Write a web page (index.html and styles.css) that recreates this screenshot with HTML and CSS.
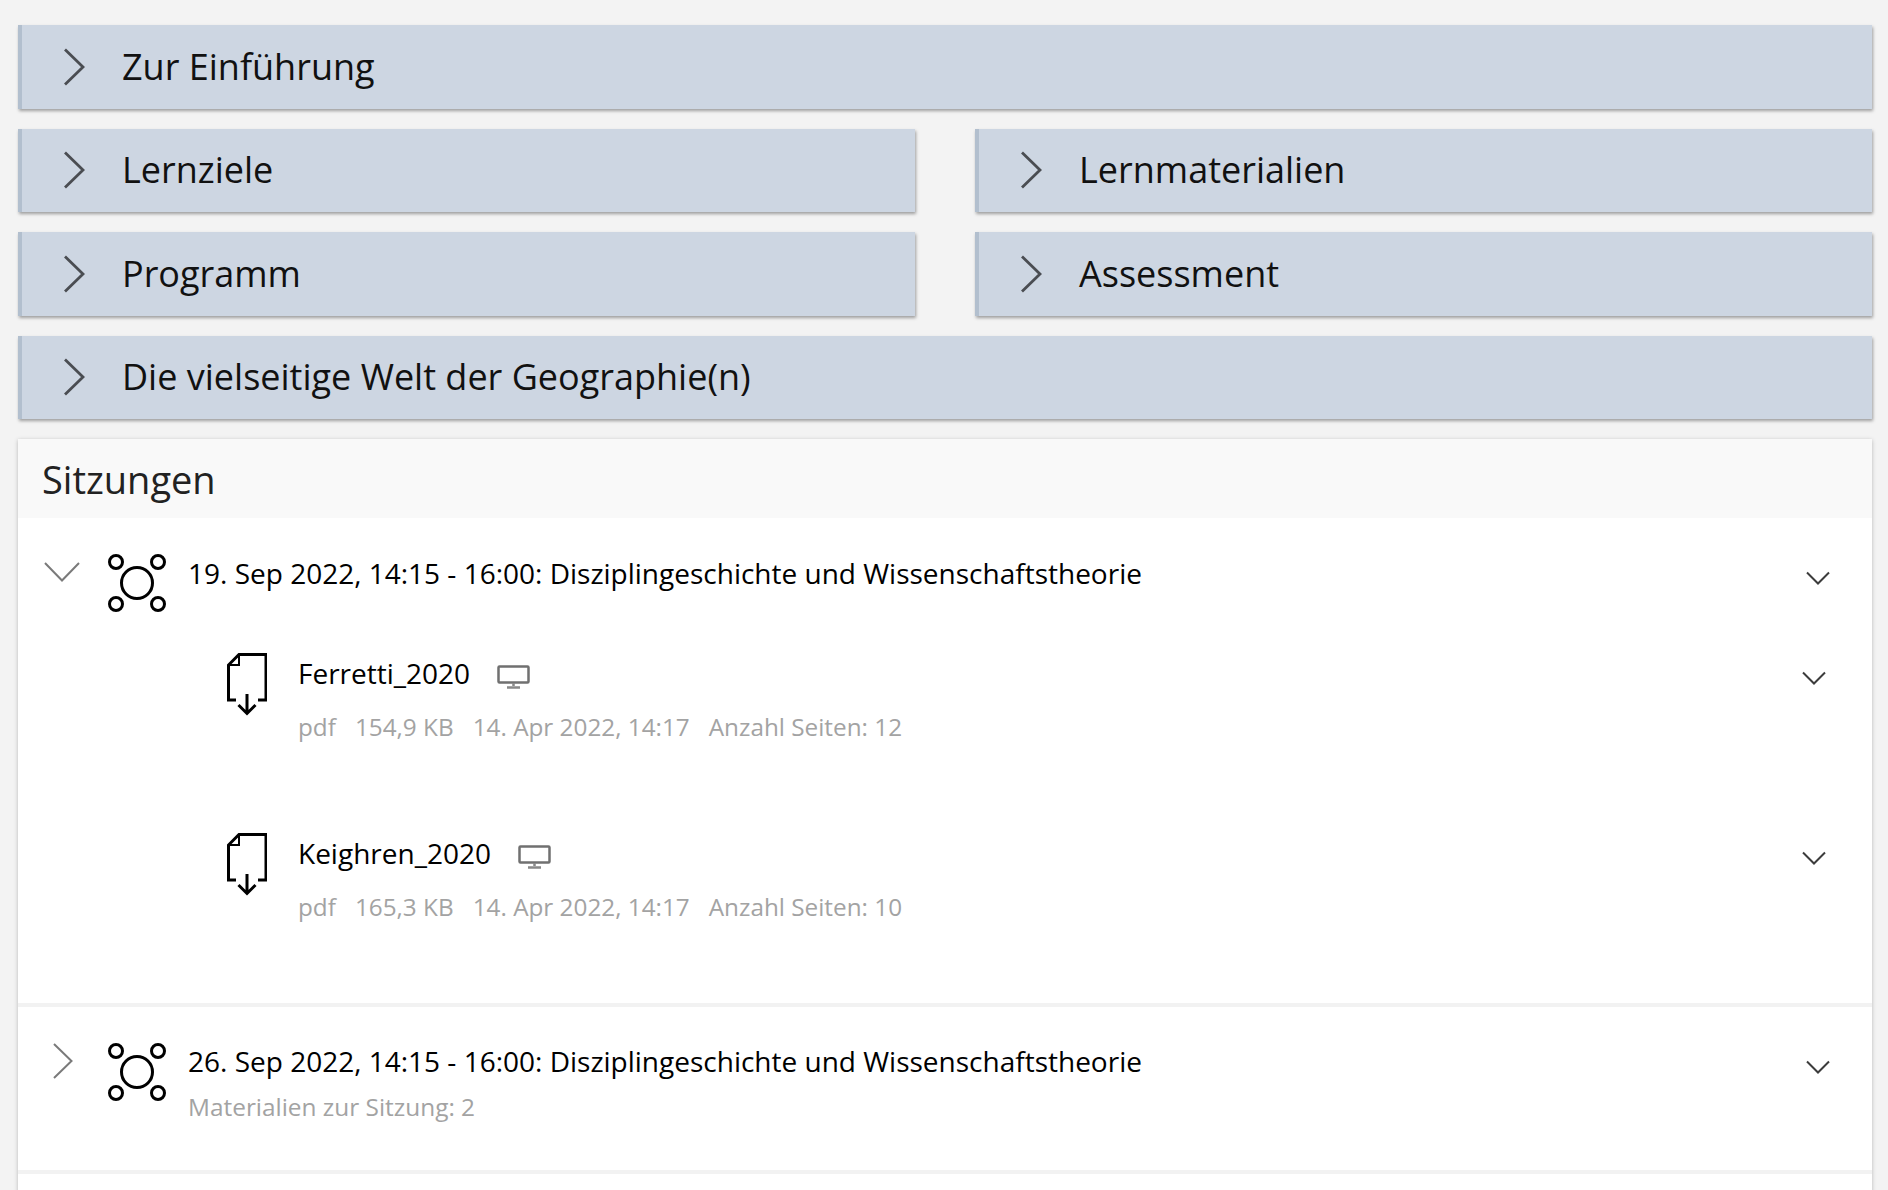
FILE: index.html
```html
<!DOCTYPE html>
<html lang="de">
<head>
<meta charset="utf-8">
<title>Sitzungen</title>
<link rel="stylesheet" href="styles.css">
</head>
<body>
<svg class="defs" width="0" height="0" aria-hidden="true">
  <symbol id="group" viewBox="0 0 58 58">
    <g fill="none" stroke="#000" stroke-width="3">
      <circle cx="29" cy="29" r="15.5"/>
      <circle cx="8" cy="8" r="6.500"/>
      <circle cx="50" cy="8" r="6.500"/>
      <circle cx="8" cy="50" r="6.500"/>
      <circle cx="50" cy="50" r="6.500"/>
    </g>
  </symbol>
  <symbol id="file" viewBox="0 0 40 64">
    <g fill="none" stroke="#000" stroke-width="3">
      <path d="M9 47H1.500V12L12 1.500H39V47H31"/>
      <path d="M1.500 12H12V1.500" stroke-width="2"/>
      <path d="M20 41V60M11.500 52L20 60.500L28.500 52"/>
    </g>
  </symbol>
  <symbol id="monitor" viewBox="0 0 33 24">
    <rect x="1.500" y="1.500" width="30" height="16" rx="1" fill="none" stroke="#707070" stroke-width="2.500"/>
    <path d="M16.500 18V21M10 22.500H23" stroke="#888" stroke-width="2.500" fill="none"/>
  </symbol>
</svg>
<main class="page">
  <section class="bar wide">
    <svg class="bar-chev" viewBox="0 0 22 38"><path d="M2 1.500L20 19L2 36.500"/></svg>
    <h2>Zur Einführung</h2>
  </section>
  <section class="bar">
    <svg class="bar-chev" viewBox="0 0 22 38"><path d="M2 1.500L20 19L2 36.500"/></svg>
    <h2>Lernziele</h2>
  </section>
  <section class="bar">
    <svg class="bar-chev" viewBox="0 0 22 38"><path d="M2 1.500L20 19L2 36.500"/></svg>
    <h2>Lernmaterialien</h2>
  </section>
  <section class="bar">
    <svg class="bar-chev" viewBox="0 0 22 38"><path d="M2 1.500L20 19L2 36.500"/></svg>
    <h2>Programm</h2>
  </section>
  <section class="bar">
    <svg class="bar-chev" viewBox="0 0 22 38"><path d="M2 1.500L20 19L2 36.500"/></svg>
    <h2>Assessment</h2>
  </section>
  <section class="bar wide">
    <svg class="bar-chev" viewBox="0 0 22 38"><path d="M2 1.500L20 19L2 36.500"/></svg>
    <h2>Die vielseitige Welt der Geographie(n)</h2>
  </section>

  <section class="card wide">
    <h2 class="card-title">Sitzungen</h2>

    <article class="session open">
      <div class="session-head">
        <span class="toggle"><svg class="toggle-down" viewBox="0 0 36 20"><path d="M1 1L18 18.500L35 1"/></svg></span>
        <svg class="group-icon"><use href="#group"/></svg>
        <div class="session-text">
          <div class="session-title">19. Sep 2022, 14:15 - 16:00: Disziplingeschichte und Wissenschaftstheorie</div>
        </div>
        <svg class="action" viewBox="0 0 24 14"><path d="M1 1.500L12 12.500L23 1.500"/></svg>
      </div>
      <div class="file">
        <svg class="file-icon"><use href="#file"/></svg>
        <div class="file-text">
          <div class="file-title">Ferretti_2020 <svg class="monitor"><use href="#monitor"/></svg></div>
          <div class="meta"><span>pdf</span><span>154,9 KB</span><span>14. Apr 2022, 14:17</span><span>Anzahl Seiten: 12</span></div>
        </div>
        <svg class="action" viewBox="0 0 24 14"><path d="M1 1.500L12 12.500L23 1.500"/></svg>
      </div>
      <div class="file">
        <svg class="file-icon"><use href="#file"/></svg>
        <div class="file-text">
          <div class="file-title">Keighren_2020 <svg class="monitor"><use href="#monitor"/></svg></div>
          <div class="meta"><span>pdf</span><span>165,3 KB</span><span>14. Apr 2022, 14:17</span><span>Anzahl Seiten: 10</span></div>
        </div>
        <svg class="action" viewBox="0 0 24 14"><path d="M1 1.500L12 12.500L23 1.500"/></svg>
      </div>
    </article>

    <article class="session closed">
      <div class="session-head">
        <span class="toggle"><svg class="toggle-right" viewBox="0 0 20 36"><path d="M1 1L18.500 18L1 35"/></svg></span>
        <svg class="group-icon"><use href="#group"/></svg>
        <div class="session-text">
          <div class="session-title">26. Sep 2022, 14:15 - 16:00: Disziplingeschichte und Wissenschaftstheorie</div>
          <div class="session-sub">Materialien zur Sitzung: 2</div>
        </div>
        <svg class="action" viewBox="0 0 24 14"><path d="M1 1.500L12 12.500L23 1.500"/></svg>
      </div>
    </article>
    <div class="session-rest"></div>
  </section>
</main>
</body>
</html>
```

FILE: styles.css
```css
html, body {
  margin: 0;
  height: 100%;
  overflow: hidden;
  background: #f3f3f3;
}

body {
  font-family: "Open Sans", "Noto Sans", sans-serif;
  color: #111;
}

.defs {
  position: absolute;
}

.page {
  display: grid;
  grid-template-columns: 897px 897px;
  column-gap: 60px;
  row-gap: 20px;
  padding: 25px 16px 0 18px;
}

.wide {
  grid-column: 1 / -1;
}

.bar {
  display: flex;
  align-items: center;
  height: 83.5px;
  box-sizing: border-box;
  background: #cdd6e2;
  border-left: 4px solid #b2bfce;
  box-shadow: 1px 2px 3px rgba(0, 0, 0, 0.35);
}

.bar h2 {
  margin: 0;
  font-size: 36px;
  font-weight: 400;
  line-height: 82px;
}

.bar-chev {
  width: 22px;
  height: 38px;
  margin-left: 41px;
  margin-right: 37px;
  fill: none;
  stroke: #4a4d52;
  stroke-width: 2.8;
}

.card {
  background: #fff;
  box-shadow: 0 1px 4px rgba(0, 0, 0, 0.25);
}

.card-title {
  margin: 0;
  height: 79px;
  padding-left: 24px;
  background: #f9f9f9;
  font-size: 38px;
  font-weight: 400;
  line-height: 80px;
  color: #222;
}

.session {
  border-bottom: 4px solid #f2f2f2;
}

.session.open {
  height: 485px;
}

.session.closed {
  height: 163px;
}

.session-head {
  display: flex;
  align-items: flex-start;
  padding-top: 36px;
  padding-right: 42px;
}

.session.open .session-head {
  padding-bottom: 42px;
}

.toggle {
  display: flex;
  justify-content: center;
  width: 86px;
  padding-top: 8px;
}

.toggle-down,
.toggle-right {
  fill: none;
  stroke: #7a7a7a;
  stroke-width: 2;
}

.toggle-down {
  width: 36px;
  height: 20px;
  margin-left: 2px;
}

.toggle-right {
  width: 20px;
  height: 36px;
  margin-top: -8px;
  margin-left: 3px;
}

.group-icon {
  flex: none;
  width: 58px;
  height: 58px;
  margin-left: 4px;
}

.session-text {
  flex: 1;
  margin-top: -1px;
  margin-left: 22px;
}

.session.closed .session-text {
  margin-top: -2px;
}

.session-title {
  font-size: 28px;
  line-height: 40px;
  color: #000;
}

.session-sub {
  margin-top: 6px;
  font-size: 24.4px;
  line-height: 40px;
  color: #a3a3a3;
}

.action {
  flex: none;
  width: 24px;
  height: 14px;
  margin-top: 17px;
  fill: none;
  stroke: #3c3c3c;
  stroke-width: 2;
}

.file {
  display: flex;
  align-items: flex-start;
  height: 180px;
  padding-left: 209px;
  padding-right: 46px;
}

.file-icon {
  flex: none;
  width: 40px;
  height: 64px;
  margin-top: -1px;
}

.file-text {
  flex: 1;
  margin-top: -1px;
  margin-left: 31px;
}

.file-title {
  display: flex;
  align-items: center;
  gap: 27px;
  font-size: 28px;
  line-height: 40px;
  color: #000;
}

.monitor {
  width: 33px;
  height: 24px;
  margin-top: 8px;
}

.meta {
  display: flex;
  gap: 19px;
  margin-top: 14px;
  font-size: 24.3px;
  line-height: 40px;
  color: #a3a3a3;
}

.session-rest {
  height: 40px;
}
```
